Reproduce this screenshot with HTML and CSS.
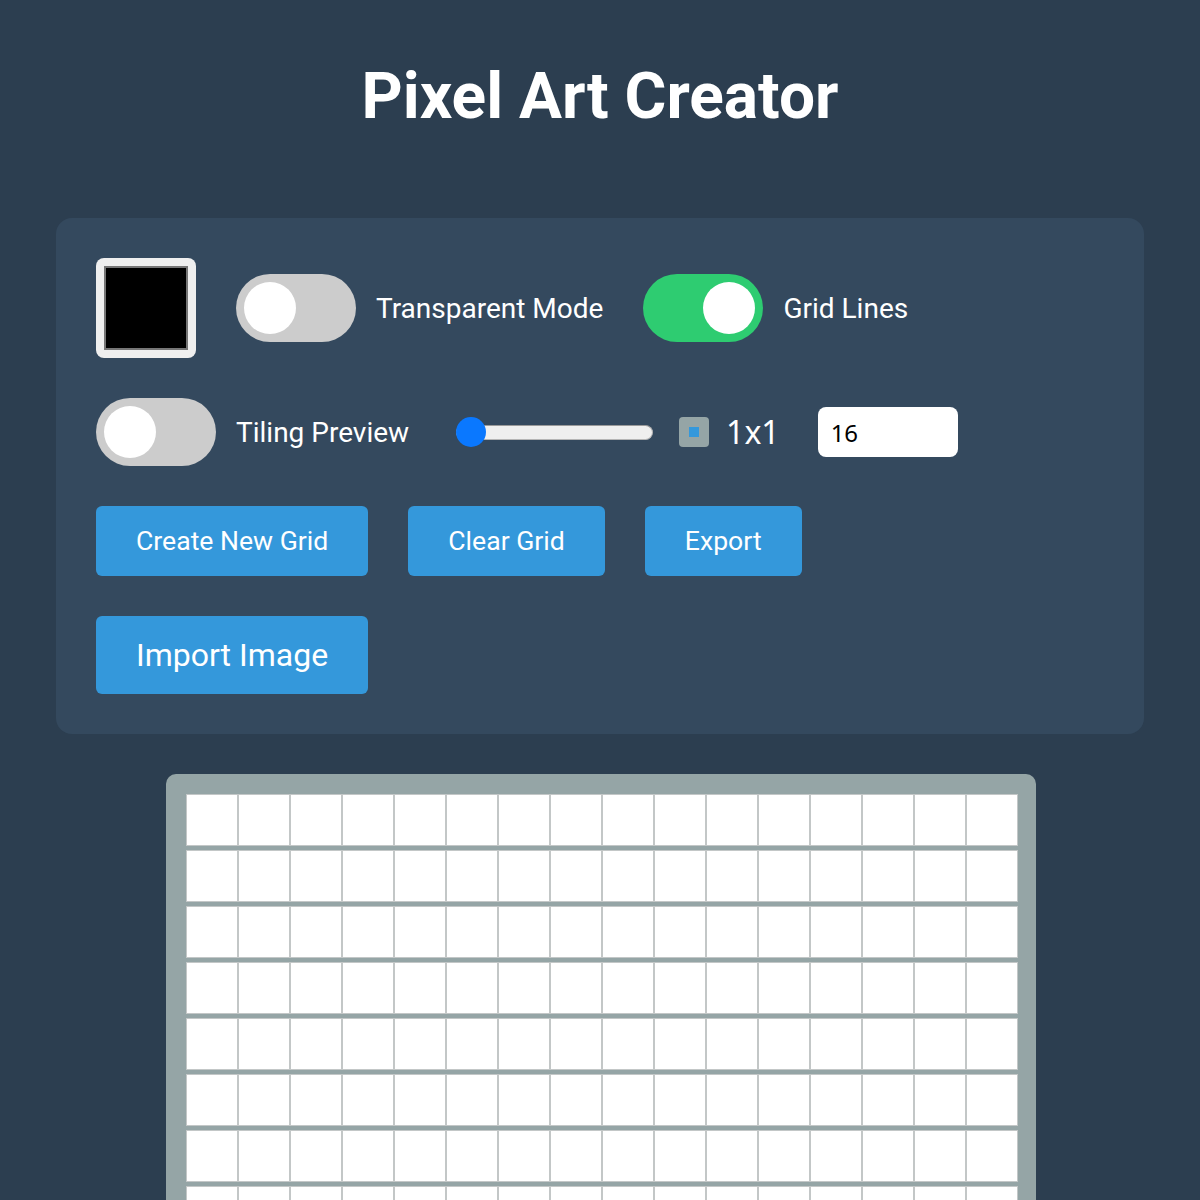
FILE: index.html
```html
<!DOCTYPE html>
<html lang="en">
<head>
<meta charset="utf-8">
<title>Pixel Art Creator</title>
<link rel="stylesheet" href="styles.css">
</head>
<body>
<div class="app">
  <h1 class="title">Pixel Art Creator</h1>
  <div class="panel">
    <div class="swatch"><div class="swatch-color"></div></div>
    <div class="group">
      <span class="toggle"><span class="knob"></span></span>
      <span class="label">Transparent Mode</span>
    </div>
    <div class="group">
      <span class="toggle on"><span class="knob"></span></span>
      <span class="label">Grid Lines</span>
    </div>
    <div class="group">
      <span class="toggle"><span class="knob"></span></span>
      <span class="label">Tiling Preview</span>
    </div>
    <div class="group slider-group">
      <span class="slider"><span class="slider-thumb"></span></span>
      <span class="check"><span class="check-dot"></span></span>
      <span class="size-label">1x1</span>
    </div>
    <div class="num-input">16</div>
    <button class="btn">Create New Grid</button>
    <button class="btn">Clear Grid</button>
    <button class="btn">Export</button>
    <button class="btn btn-lg">Import Image</button>
  </div>
  <div class="grid">
    <div class="row"><span class="cell"></span><span class="cell"></span><span class="cell"></span><span class="cell"></span><span class="cell"></span><span class="cell"></span><span class="cell"></span><span class="cell"></span><span class="cell"></span><span class="cell"></span><span class="cell"></span><span class="cell"></span><span class="cell"></span><span class="cell"></span><span class="cell"></span><span class="cell"></span></div>
    <div class="row"><span class="cell"></span><span class="cell"></span><span class="cell"></span><span class="cell"></span><span class="cell"></span><span class="cell"></span><span class="cell"></span><span class="cell"></span><span class="cell"></span><span class="cell"></span><span class="cell"></span><span class="cell"></span><span class="cell"></span><span class="cell"></span><span class="cell"></span><span class="cell"></span></div>
    <div class="row"><span class="cell"></span><span class="cell"></span><span class="cell"></span><span class="cell"></span><span class="cell"></span><span class="cell"></span><span class="cell"></span><span class="cell"></span><span class="cell"></span><span class="cell"></span><span class="cell"></span><span class="cell"></span><span class="cell"></span><span class="cell"></span><span class="cell"></span><span class="cell"></span></div>
    <div class="row"><span class="cell"></span><span class="cell"></span><span class="cell"></span><span class="cell"></span><span class="cell"></span><span class="cell"></span><span class="cell"></span><span class="cell"></span><span class="cell"></span><span class="cell"></span><span class="cell"></span><span class="cell"></span><span class="cell"></span><span class="cell"></span><span class="cell"></span><span class="cell"></span></div>
    <div class="row"><span class="cell"></span><span class="cell"></span><span class="cell"></span><span class="cell"></span><span class="cell"></span><span class="cell"></span><span class="cell"></span><span class="cell"></span><span class="cell"></span><span class="cell"></span><span class="cell"></span><span class="cell"></span><span class="cell"></span><span class="cell"></span><span class="cell"></span><span class="cell"></span></div>
    <div class="row"><span class="cell"></span><span class="cell"></span><span class="cell"></span><span class="cell"></span><span class="cell"></span><span class="cell"></span><span class="cell"></span><span class="cell"></span><span class="cell"></span><span class="cell"></span><span class="cell"></span><span class="cell"></span><span class="cell"></span><span class="cell"></span><span class="cell"></span><span class="cell"></span></div>
    <div class="row"><span class="cell"></span><span class="cell"></span><span class="cell"></span><span class="cell"></span><span class="cell"></span><span class="cell"></span><span class="cell"></span><span class="cell"></span><span class="cell"></span><span class="cell"></span><span class="cell"></span><span class="cell"></span><span class="cell"></span><span class="cell"></span><span class="cell"></span><span class="cell"></span></div>
    <div class="row"><span class="cell"></span><span class="cell"></span><span class="cell"></span><span class="cell"></span><span class="cell"></span><span class="cell"></span><span class="cell"></span><span class="cell"></span><span class="cell"></span><span class="cell"></span><span class="cell"></span><span class="cell"></span><span class="cell"></span><span class="cell"></span><span class="cell"></span><span class="cell"></span></div>
    <div class="row"><span class="cell"></span><span class="cell"></span><span class="cell"></span><span class="cell"></span><span class="cell"></span><span class="cell"></span><span class="cell"></span><span class="cell"></span><span class="cell"></span><span class="cell"></span><span class="cell"></span><span class="cell"></span><span class="cell"></span><span class="cell"></span><span class="cell"></span><span class="cell"></span></div>
  </div>
</div>
</body>
</html>
```

FILE: styles.css
```css
* { box-sizing: border-box; }

body {
  margin: 0;
  background: #2c3e50;
  color: #ffffff;
  font-family: Roboto, "Liberation Sans", sans-serif;
}

.app {
  padding: 59px 56px 0;
}

.title {
  margin: 0 0 84px;
  font-size: 64px;
  font-weight: 700;
  text-align: center;
  line-height: 75px;
}

.panel {
  background: #34495e;
  border-radius: 16px;
  padding: 40px;
  display: flex;
  flex-wrap: wrap;
  align-items: center;
  gap: 40px;
}

.swatch {
  width: 100px;
  height: 100px;
  background: #efefef;
  border-radius: 8px;
  padding: 8px;
}

.swatch-color {
  width: 100%;
  height: 100%;
  background: #000;
  border: 2px solid #767676;
}

.group {
  display: flex;
  align-items: center;
  gap: 20px;
}

.toggle {
  width: 120px;
  height: 68px;
  border-radius: 34px;
  background: #cccccc;
  padding: 8px;
  display: flex;
}

.toggle.on {
  background: #2ecc71;
  justify-content: flex-end;
}

.knob {
  width: 52px;
  height: 52px;
  border-radius: 50%;
  background: #ffffff;
}

.label {
  font-size: 28px;
}

.slider-group {
  gap: 0;
}

.slider {
  position: relative;
  width: 197px;
  height: 15px;
  margin-left: 7px;
  border-radius: 8px;
  background: #efefef;
  border: 1px solid #b5b5b5;
  border-top-color: #9a9a9a;
}

.slider-thumb {
  position: absolute;
  left: -1px;
  top: 50%;
  width: 30px;
  height: 30px;
  margin-top: -15px;
  border-radius: 50%;
  background: #0a78ff;
}

.check {
  width: 30px;
  height: 30px;
  margin-left: 26px;
  border-radius: 4px;
  background: #95a5a6;
  display: flex;
  align-items: center;
  justify-content: center;
}

.check-dot {
  width: 10px;
  height: 10px;
  background: #3498db;
}

.size-label {
  margin-left: 17px;
  margin-right: -2px;
  font-family: "Noto Sans", "Open Sans", sans-serif;
  font-size: 32px;
  line-height: 40px;
}

.num-input {
  width: 140px;
  height: 50px;
  background: #ffffff;
  border-radius: 8px;
  padding: 0 13px;
  color: #000;
  font-family: "Noto Sans", "Open Sans", sans-serif;
  font-size: 24px;
  display: flex;
  align-items: center;
}

.btn {
  background: #3498db;
  color: #fff;
  border: none;
  border-radius: 6px;
  padding: 20px 40px;
  font-family: Roboto, "Liberation Sans", sans-serif;
  font-size: 26.6px;
  line-height: 30px;
}

.btn-lg {
  font-size: 32px;
  line-height: 38px;
}

.grid {
  width: 870px;
  margin: 40px auto 0;
  padding: 20px 18px 20px 20px;
  background: #95a5a6;
  border-radius: 10px;
  position: relative;
  left: 1px;
}

.row {
  display: flex;
  margin-bottom: 4px;
}

.cell {
  width: 52px;
  height: 52px;
  background: #ffffff;
  border: 1px solid #c3c7c7;
}
```
